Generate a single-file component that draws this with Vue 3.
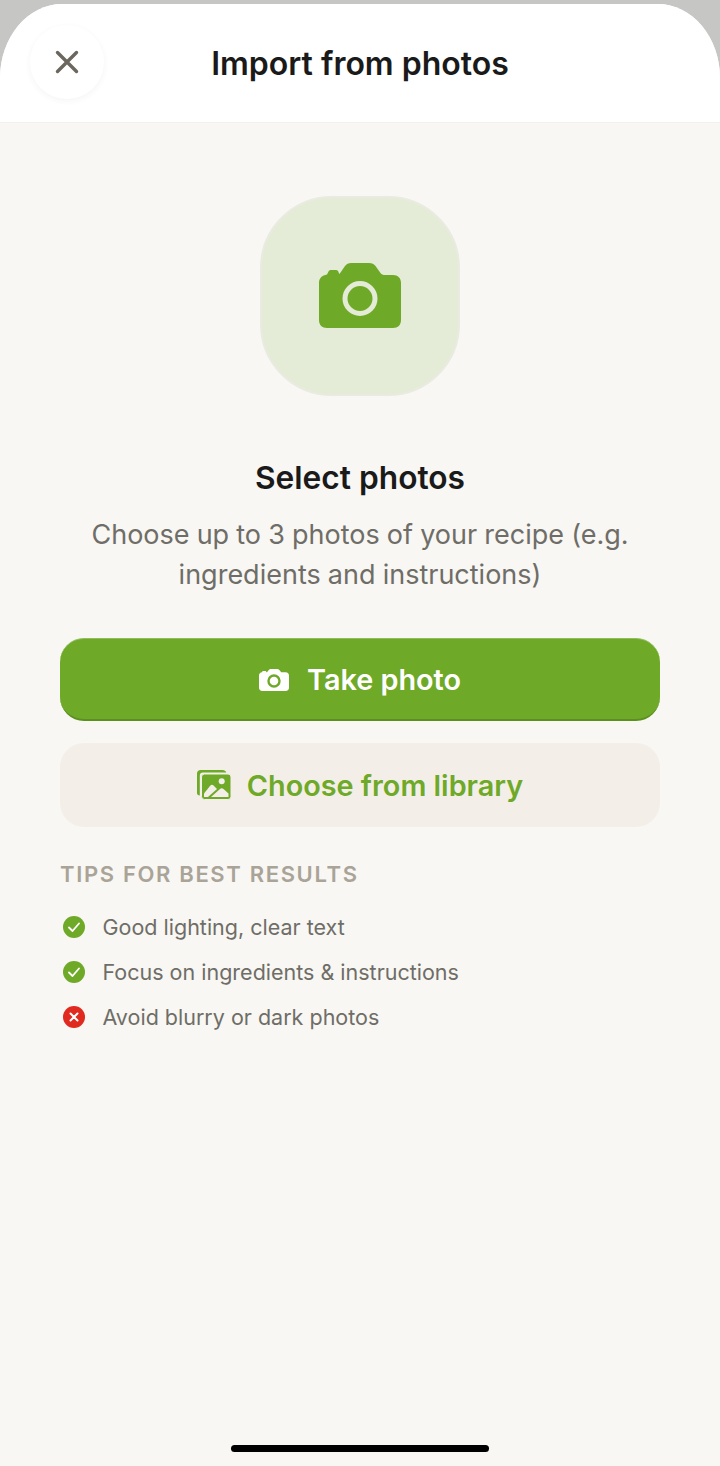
<template>
  <div class="screen">
    <div class="sheet">
      <header class="header">
        <button class="close" aria-label="Close">
          <svg width="28" height="28" viewBox="0 0 28 28" fill="none">
            <path d="M4.500 4.500 L23.500 23.500 M23.500 4.500 L4.500 23.500" stroke="#6b675f" stroke-width="3.400" stroke-linecap="round" />
          </svg>
        </button>
        <h1 class="header-title">Import from photos</h1>
      </header>

      <main class="content">
        <div class="tile">
          <svg class="tile-icon" width="82" height="65" viewBox="0 0 82 65">
            <path fill="#6fa928" d="M0 20 C0 15 3 12.500 8 11.500 L9.500 8.500 C10 7.500 11 7 12 7 H17 C18.500 7 19.500 8 19.800 10 L20.500 11 L26 3 C27.500 1 29.500 0 32 0 H50 C53 0 55 1 56.500 3 L61.500 10 C62.500 11.500 64 12 66 12 H74 C79 12 82 15 82 20 V57 C82 62 79 65 74 65 H8 C3 65 0 62 0 57 Z" />
            <circle cx="41" cy="35.500" r="15" fill="none" stroke="#e4ebd6" stroke-width="5" />
          </svg>
        </div>

        <h2 class="title">Select photos</h2>
        <p class="subtitle">Choose up to 3 photos of your recipe (e.g. ingredients and instructions)</p>

        <button class="btn btn-primary">
          <svg width="30" height="22" viewBox="0 0 30 22">
            <path fill="#fff" d="M0 6.500 C0 4.500 1.200 3.500 3 3.200 L3.600 2 H6.800 L7.800 3.500 L9.800 1 C10.400 .3 11 0 12 0 H18 C19 0 19.800 .3 20.400 1 L22.200 3.200 H26.500 C28.800 3.200 30 4.500 30 6.500 V18.500 C30 20.800 28.800 22 26.500 22 H3.500 C1.200 22 0 20.800 0 18.500 Z" />
            <circle cx="15" cy="12" r="5.500" fill="none" stroke="#6fa928" stroke-width="2.400" />
          </svg>
          <span>Take photo</span>
        </button>

        <button class="btn btn-secondary">
          <svg width="34" height="30" viewBox="0 0 34 30">
            <path fill="#6fa928" d="M0 23 V3.500 C0 1.500 1.500 0 3.500 0 H25.500 C27.500 0 28.800 1 29.300 2.500 H6 C3.800 2.500 2.800 3.500 2.800 6 V25.500 C1 25.300 0 24.500 0 23 Z" />
            <rect x="4.500" y="4" width="29.500" height="25.500" rx="3" fill="#6fa928" stroke="#f3efe8" stroke-width="1" />
            <circle cx="24.700" cy="11.300" r="3" fill="#f3efe8" />
            <path fill="#f3efe8" d="M7 27 V23.500 L13 16 Q14.700 14 16.500 15.500 L20 19 L11 27 Z" />
            <path fill="#f3efe8" d="M14 27 L23 19 Q24.700 17.500 26.500 19 L31.500 23.500 V27 Z" />
          </svg>
          <span>Choose from library</span>
        </button>

        <section class="tips">
          <h3 class="tips-title">TIPS FOR BEST RESULTS</h3>
          <ul class="tips-list">
            <li v-for="tip in tips" :key="tip.text" class="tip">
              <span class="tip-icon" :class="tip.ok ? 'ok' : 'bad'">
                <svg width="14" height="14" viewBox="0 0 14 14" fill="none">
                  <path v-if="tip.ok" d="M2 7.500 L5.500 11 L12 3.500" stroke="#fff" stroke-width="1.800" stroke-linecap="round" stroke-linejoin="round" />
                  <path v-else d="M3.500 3.500 L10.500 10.500 M10.500 3.500 L3.500 10.500" stroke="#fff" stroke-width="2" stroke-linecap="round" />
                </svg>
              </span>
              <span>{{ tip.text }}</span>
            </li>
          </ul>
        </section>
      </main>

      <div class="home-indicator"></div>
    </div>
  </div>
</template>

<script setup>
const tips = [
  { text: 'Good lighting, clear text', ok: true },
  { text: 'Focus on ingredients & instructions', ok: true },
  { text: 'Avoid blurry or dark photos', ok: false }
];
</script>

<style>
html, body {
  margin: 0;
  background: #f8f7f3;
}
</style>

<style scoped>
.screen {
  width: 720px;
  height: 1466px;
  padding-top: 4px;
  box-sizing: border-box;
  background: #c6c6c4;
  font-family: Inter, "Liberation Sans", sans-serif;
  overflow: hidden;
}

.sheet {
  height: 100%;
  display: flex;
  flex-direction: column;
  position: relative;
  background: #f8f7f3;
  border-radius: 62px 62px 0 0 / 74px 74px 0 0;
  overflow: hidden;
}

.header {
  height: 119px;
  flex-shrink: 0;
  display: flex;
  align-items: center;
  justify-content: center;
  position: relative;
  background: #fff;
  border-bottom: 1px solid #f3f1ec;
  box-sizing: border-box;
}

.close {
  position: absolute;
  left: 30px;
  top: 21px;
  width: 74px;
  height: 74px;
  padding: 0;
  border: none;
  border-radius: 50%;
  background: #fff;
  box-shadow: 0 2px 6px rgba(60, 50, 30, 0.05);
  display: flex;
  align-items: center;
  justify-content: center;
}

.header-title {
  margin: 0;
  font-size: 32px;
  font-weight: 560;
  color: #1a1a1a;
}

.content {
  flex: 1;
  display: flex;
  flex-direction: column;
  align-items: center;
  padding: 73px 60px 0;
}

.tile {
  width: 200px;
  height: 200px;
  box-sizing: border-box;
  border-radius: 72px;
  background: #e4ebd6;
  border: 2px solid #e9ebe0;
  display: flex;
  align-items: center;
  justify-content: center;
}

.tile-icon {
  margin-bottom: 2px;
}

.title {
  margin: 62px 0 0;
  font-size: 31.700px;
  line-height: 40px;
  font-weight: 580;
  color: #1a1a1a;
}

.subtitle {
  margin: 17px 0 0;
  font-size: 27px;
  line-height: 40px;
  word-spacing: -0.450px;
  color: #6f6d67;
  text-align: center;
}

.btn {
  width: 100%;
  box-sizing: border-box;
  display: flex;
  align-items: center;
  justify-content: center;
  border: none;
  padding: 0;
  border-radius: 24px;
  font-family: inherit;
  font-weight: 560;
  font-size: 28.800px;
}

.btn-primary {
  height: 83px;
  margin-top: 43px;
  padding-top: 1px;
  gap: 18px;
  background: #6fa928;
  border-top: 1px solid #93bd5c;
  border-bottom: 2px solid #5b9020;
  color: #fff;
}

.btn-secondary {
  height: 84px;
  margin-top: 22px;
  gap: 16px;
  background: #f3efe8;
  color: #6fa928;
}

.tips {
  width: 100%;
  margin-top: 32px;
}

.tips-title {
  margin: 0;
  font-size: 22px;
  line-height: 30px;
  font-weight: 600;
  letter-spacing: 1.650px;
  color: #a9a398;
}

.tips-list {
  list-style: none;
  margin: 23px 0 0;
  padding: 0;
  display: flex;
  flex-direction: column;
  gap: 15px;
}

.tip {
  display: flex;
  align-items: center;
  gap: 18px;
  padding-left: 2.500px;
  height: 30px;
  font-size: 21.500px;
  color: #6f6d67;
}

.tip-icon {
  width: 22px;
  height: 22px;
  border-radius: 50%;
  display: flex;
  align-items: center;
  justify-content: center;
}

.tip-icon.ok {
  background: #6fa928;
}

.tip-icon.bad {
  background: #e0291f;
}

.home-indicator {
  position: absolute;
  left: 231px;
  bottom: 14px;
  width: 258px;
  height: 7px;
  border-radius: 4px;
  background: #000;
}
</style>
